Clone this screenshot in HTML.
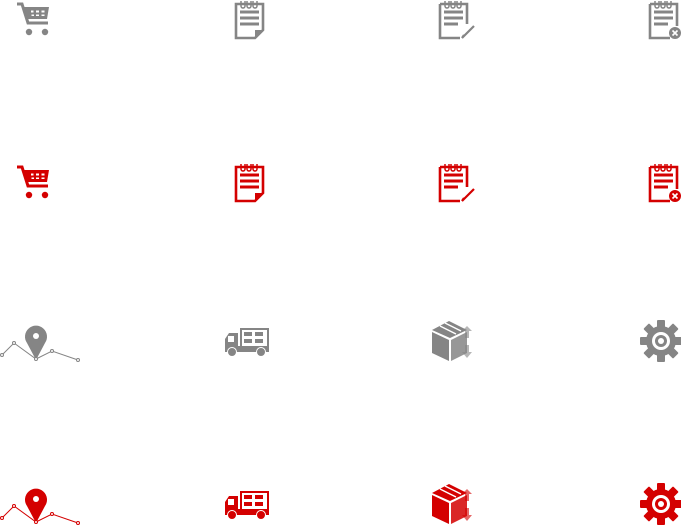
<!DOCTYPE html>
<html><head><style>html,body{margin:0;padding:0;background:#fff;width:681px;height:527px;overflow:hidden}</style></head>
<body>
<svg width="681" height="527" viewBox="0 0 681 527" xmlns="http://www.w3.org/2000/svg">
<defs>
<g id="cart">
 <path d="M1,3 H6 L12,22 H32" fill="none" stroke="currentColor" stroke-width="3"/>
 <path d="M8,6 H33 L31,18 H11 Z" fill="currentColor"/>
 <path d="M15,9.5 H17.5 V11.5 H15 Z M20,9.5 H23 V11.5 H20 Z M25.5,9.5 H28.5 V11.5 H25.5 Z M15.5,13.5 H18 V15 H15.5 Z M20,13.5 H23 V15 H20 Z M25.5,13.5 H28.5 V15 H25.5 Z" fill="#fff"/>
 <circle cx="13" cy="31" r="3.2" fill="currentColor"/><circle cx="29" cy="31" r="3.2" fill="currentColor"/>
</g>
<g id="pad">
 <path d="M2,4 H29 V30 L21,38 H2 Z" fill="none" stroke="currentColor" stroke-width="2.6"/>
 <path d="M21,38 V30 H29" fill="currentColor"/>
 <path d="M7,1 V6 a2,2 0 0 0 4,0 V1 M13,1 V6 a2,2 0 0 0 4,0 V1 M19,1 V6 a2,2 0 0 0 4,0 V1" fill="none" stroke="currentColor" stroke-width="1.5"/>
 <path d="M6,12 H25 M6,18 H25 M6,24 H25" stroke="currentColor" stroke-width="3"/>
</g>
<g id="padedit">
 <path d="M2,4 H29 V24 M22,38 H2 V4" fill="none" stroke="currentColor" stroke-width="2.6"/>
 <path d="M7,1 V6 a2,2 0 0 0 4,0 V1 M13,1 V6 a2,2 0 0 0 4,0 V1 M19,1 V6 a2,2 0 0 0 4,0 V1" fill="none" stroke="currentColor" stroke-width="1.5"/>
 <path d="M6,12 H25 M6,18 H25 M6,24 H20" stroke="currentColor" stroke-width="3"/>
 <path d="M36,26 L26,36 L24,38 L26,35" fill="none" stroke="currentColor" stroke-width="2.2"/>
</g>
<g id="padx">
 <path d="M2,4 H29 V26 M22,38 H2 V4" fill="none" stroke="currentColor" stroke-width="2.6"/>
 <path d="M7,1 V6 a2,2 0 0 0 4,0 V1 M13,1 V6 a2,2 0 0 0 4,0 V1 M19,1 V6 a2,2 0 0 0 4,0 V1" fill="none" stroke="currentColor" stroke-width="1.5"/>
 <path d="M6,12 H25 M6,18 H25 M6,24 H20" stroke="currentColor" stroke-width="3"/>
 <circle cx="27" cy="33" r="6" fill="currentColor"/>
 <path d="M24.5,30.5 L29.5,35.5 M29.5,30.5 L24.5,35.5" stroke="#fff" stroke-width="1.6"/>
</g>
<g id="map">
 <polyline points="2,31 14,19 36,35 52,27 78,36" fill="none" stroke="currentColor" stroke-width="1"/>
 <g fill="#fff" stroke="currentColor" stroke-width="1"><circle cx="2" cy="31" r="1.5"/><circle cx="14" cy="19" r="1.5"/><circle cx="52" cy="27" r="1.5"/><circle cx="78" cy="36" r="1.5"/></g>
 <path d="M36,36 L27,19 A11,11 0 1 1 45,19 Z" fill="currentColor"/>
 <circle cx="36" cy="12" r="3" fill="#fff"/>
 <circle cx="36" cy="35" r="1.5" fill="#fff" stroke="currentColor"/>
</g>
<g id="truck">
 <rect x="15" y="0" width="29" height="21" fill="currentColor"/>
 <rect x="17" y="2" width="25" height="17" fill="#fff"/>
 <rect x="19" y="4" width="8" height="4" fill="currentColor"/><rect x="30" y="4" width="8" height="4" fill="currentColor"/>
 <rect x="19" y="11" width="8" height="4" fill="currentColor"/><rect x="30" y="11" width="8" height="4" fill="currentColor"/>
 <path d="M0,22 V11 L4,5 H13 V24 H44 V20 H15 V22 Z" fill="currentColor"/>
 <rect x="3" y="8" width="6" height="6" fill="#fff"/>
 <rect x="0" y="18" width="44" height="6" fill="currentColor"/>
 <circle cx="7" cy="24" r="4.5" fill="currentColor" stroke="#fff" stroke-width="1"/>
 <circle cx="36" cy="24" r="4.5" fill="currentColor" stroke="#fff" stroke-width="1"/>
</g>
<g id="box">
 <path d="M0,12 L17,20 V41 L0,33 Z" fill="currentColor"/>
 <path d="M19,20 L35,12 V33 L19,41 Z" fill="currentColor" opacity="0.85"/>
 <path d="M0,10 L17,1 L35,10 L18,18 Z" fill="currentColor"/>
 <path d="M8,6 L24,14 M13,3 L29,11" stroke="#fff" stroke-width="1.5"/>
 <path d="M35,6 L40,11 H37 V18 H33 V11 H30 Z M33,25 H37 V32 H40 L35,38 L30,32 H33 Z" fill="currentColor" opacity="0.6"/>
</g>
<g id="gear">
 <g fill="currentColor">
  <circle cx="21" cy="21" r="15"/>
  <g id="teeth"><rect x="17" y="0" width="8" height="42" rx="1"/><rect x="0" y="17" width="42" height="8" rx="1"/></g>
  <use href="#teeth" transform="rotate(45 21 21)"/>
 </g>
 <circle cx="21" cy="21" r="9" fill="#fff"/>
 <circle cx="21" cy="21" r="6" fill="currentColor"/>
 <circle cx="21" cy="21" r="3" fill="#fff"/>
</g>
</defs>
<g color="#858585">
 <use href="#cart" x="16" y="1"/>
 <use href="#pad" x="234" y="0"/>
 <use href="#padedit" x="438" y="0"/>
 <use href="#padx" x="648" y="0"/>
 <use href="#map" x="0" y="324"/>
 <use href="#truck" x="225" y="328"/>
 <use href="#box" x="432" y="320"/>
 <use href="#gear" x="640" y="320"/>
</g>
<g color="#d40000">
 <use href="#cart" x="16" y="164"/>
 <use href="#pad" x="234" y="163"/>
 <use href="#padedit" x="438" y="163"/>
 <use href="#padx" x="648" y="163"/>
 <use href="#map" x="0" y="487"/>
 <use href="#truck" x="225" y="491"/>
 <use href="#box" x="432" y="483"/>
 <use href="#gear" x="640" y="483"/>
</g>
</svg>
</body></html>
